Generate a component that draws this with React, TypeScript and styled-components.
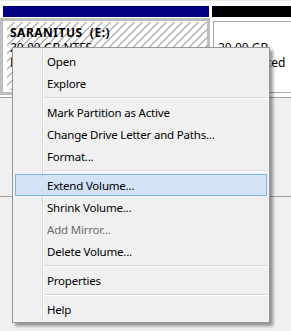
import React from "react";
import styled, { createGlobalStyle } from "styled-components";

const Global = createGlobalStyle`
  html, body { margin: 0; padding: 0; background: #f0f0f0; }
  body { font-family: "Noto Sans", "Open Sans", sans-serif; font-size: 12px; }
`;

const Page = styled.div`
  position: relative;
  width: 291px;
  height: 331px;
  overflow: hidden;
  background: #f0f0f0;
`;

const DiskRow = styled.div`
  display: grid;
  grid-template-columns: 210px 1fr;
  grid-template-rows: 11px 1fr;
  column-gap: 1px;
  height: 91px;
  padding-top: 5px;
  background: #ffffff;
  border-top: 1px solid #e6e6e6;
  border-bottom: 1px solid #a0a0a0;
`;

const Header = styled.div<{ $color: string; $ml: number; $mr: number }>`
  background: ${(p) => p.$color};
  margin-left: ${(p) => p.$ml}px;
  margin-right: ${(p) => p.$mr}px;
`;

const SelectedFrame = styled.div`
  margin-top: 1px;
  height: 77px;
  box-sizing: border-box;
  border: 3px solid #bdbdbd;
  padding: 1px 0 2px 4px;
  background: #ffffff;
  display: flex;
`;

const Hatched = styled.div`
  flex: 1;
  box-sizing: border-box;
  padding: 3px 0 0 3px;
  background: repeating-linear-gradient(
    135deg,
    #ffffff 0px,
    #ffffff 4.6px,
    #b6b6b6 4.6px,
    #b6b6b6 5.66px
  );
  overflow: hidden;
`;

const PlainBox = styled.div`
  margin: 4px 0 0 2px;
  height: 72px;
  box-sizing: border-box;
  border: 1px solid #a9a9a9;
  border-right: none;
  padding: 3px 0 0 4px;
  background: #ffffff;
  overflow: hidden;
`;

const InfoLine = styled.div<{ $bold?: boolean }>`
  font-family: "Noto Sans", "Open Sans", sans-serif;
  font-size: 12px;
  line-height: 15px;
  height: 15px;
  font-weight: ${(p) => (p.$bold ? 700 : 400)};
  letter-spacing: ${(p) => (p.$bold ? "0.5px" : "0")};
  color: #000000;
  white-space: pre;
`;

const Divider = styled.div`
  margin-top: 98px;
  height: 1px;
  background: #a0a0a0;
`;

const Menu = styled.div`
  position: absolute;
  left: 12px;
  top: 47px;
  width: 258px;
  box-sizing: border-box;
  border: 1px solid #979797;
  padding: 2px;
  background: #f0f0f0;
  box-shadow: 3px 3px 3px rgba(0, 0, 0, 0.4);
  &::before {
    content: "";
    position: absolute;
    left: 29px;
    top: 1px;
    bottom: 1px;
    width: 1px;
    background: #d7d7d7;
    border-right: 1px solid #ffffff;
  }
`;

const Item = styled.div<{ $active?: boolean; $disabled?: boolean }>`
  position: relative;
  height: 22px;
  box-sizing: border-box;
  display: flex;
  align-items: center;
  padding-left: 31px;
  border: 1px solid ${(p) => (p.$active ? "#7eb4ea" : "transparent")};
  background: ${(p) => (p.$active ? "#d1e3f4" : "transparent")};
  color: ${(p) => (p.$disabled ? "#6d6d6d" : "#000000")};
  font-family: "Noto Sans", "Open Sans", sans-serif;
  font-size: 11.5px;
  letter-spacing: -0.2px;
  white-space: nowrap;
`;

const Separator = styled.div`
  height: 7px;
  box-sizing: border-box;
  padding-top: 3px;
  margin-left: 29px;
  &::after {
    content: "";
    display: block;
    height: 1px;
    background: #d7d7d7;
    border-bottom: 1px solid #ffffff;
  }
`;

type Entry = { label?: string; sep?: boolean; active?: boolean; disabled?: boolean };

const entries: Entry[] = [
  { label: "Open" },
  { label: "Explore" },
  { sep: true },
  { label: "Mark Partition as Active" },
  { label: "Change Drive Letter and Paths..." },
  { label: "Format..." },
  { sep: true },
  { label: "Extend Volume...", active: true },
  { label: "Shrink Volume..." },
  { label: "Add Mirror...", disabled: true },
  { label: "Delete Volume..." },
  { sep: true },
  { label: "Properties" },
  { sep: true },
  { label: "Help" },
];

export default function App() {
  return (
    <Page>
      <Global />
      <DiskRow>
        <Header $color="#000080" $ml={3} $mr={1} />
        <Header $color="#000000" $ml={1} $mr={0} />
        <SelectedFrame>
          <Hatched>
            <InfoLine $bold>{"SARANITUS  (E:)"}</InfoLine>
            <InfoLine>20.00 GB NTFS</InfoLine>
            <InfoLine>Healthy (Primary Partition)</InfoLine>
          </Hatched>
        </SelectedFrame>
        <PlainBox>
          <InfoLine />
          <InfoLine>20.00 GB</InfoLine>
          <InfoLine>Unallocated</InfoLine>
        </PlainBox>
      </DiskRow>
      <Divider />
      <Menu>
        {entries.map((e, i) =>
          e.sep ? (
            <Separator key={i} />
          ) : (
            <Item key={i} $active={e.active} $disabled={e.disabled}>
              {e.label}
            </Item>
          )
        )}
      </Menu>
    </Page>
  );
}
